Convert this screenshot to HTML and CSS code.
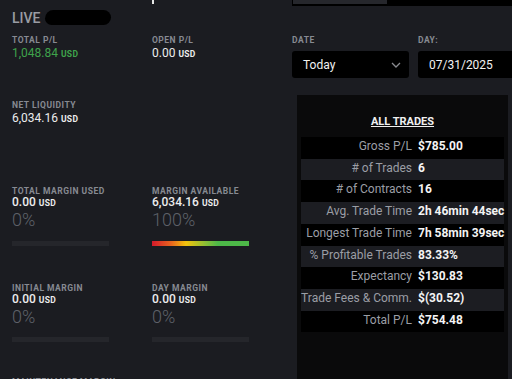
FILE: index.html
```html
<!DOCTYPE html>
<html lang="en">
<head>
<meta charset="utf-8">
<title>Account</title>
<link rel="stylesheet" href="styles.css">
</head>
<body>
<div class="page">
  <div class="left">
    <div class="title-frag"></div>
    <div class="live-row"><span class="live">LIVE</span><span class="redact"></span></div>

    <div class="row row-a">
      <div class="stat">
        <div class="label">TOTAL P/L</div>
        <div class="value big green">1,048.84 <span class="unit">USD</span></div>
      </div>
      <div class="stat">
        <div class="label">OPEN P/L</div>
        <div class="value big">0.00 <span class="unit">USD</span></div>
      </div>
    </div>

    <div class="row row-b">
      <div class="stat">
        <div class="label">NET LIQUIDITY</div>
        <div class="value big">6,034.16 <span class="unit">USD</span></div>
      </div>
    </div>

    <div class="row row-c">
      <div class="stat">
        <div class="label">TOTAL MARGIN USED</div>
        <div class="value">0.00 <span class="unit">USD</span></div>
        <div class="pct">0%</div>
        <div class="bar"></div>
      </div>
      <div class="stat">
        <div class="label">MARGIN AVAILABLE</div>
        <div class="value">6,034.16 <span class="unit">USD</span></div>
        <div class="pct">100%</div>
        <div class="bar bar-grad"></div>
      </div>
    </div>

    <div class="row row-d">
      <div class="stat">
        <div class="label">INITIAL MARGIN</div>
        <div class="value">0.00 <span class="unit">USD</span></div>
        <div class="pct">0%</div>
        <div class="bar bar-d"></div>
      </div>
      <div class="stat">
        <div class="label">DAY MARGIN</div>
        <div class="value">0.00 <span class="unit">USD</span></div>
        <div class="pct">0%</div>
        <div class="bar bar-d"></div>
      </div>
    </div>

    <div class="row row-e">
      <div class="stat">
        <div class="label">MAINTENANCE MARGIN</div>
      </div>
    </div>
  </div>

  <div class="right">
    <div class="top-strip"><div class="top-tab"></div></div>
    <div class="filters">
      <div class="label">DATE</div>
      <div class="label">DAY:</div>
      <div class="box select">
        <span>Today</span>
        <svg class="chev" width="10" height="6" viewBox="0 0 10 6"><path d="M1 1 L5 5 L9 1" fill="none" stroke="#8a8b90" stroke-width="1.3"/></svg>
      </div>
      <div class="box date">07/31/2025</div>
    </div>

    <div class="panel">
      <div class="panel-title">ALL TRADES</div>
      <div class="trades">
        <div class="tr"><span class="k">Gross P/L</span><span class="v">$785.00</span></div>
        <div class="tr"><span class="k"># of Trades</span><span class="v">6</span></div>
        <div class="tr"><span class="k"># of Contracts</span><span class="v">16</span></div>
        <div class="tr"><span class="k">Avg. Trade Time</span><span class="v">2h 46min 44sec</span></div>
        <div class="tr"><span class="k">Longest Trade Time</span><span class="v">7h 58min 39sec</span></div>
        <div class="tr"><span class="k">% Profitable Trades</span><span class="v">83.33%</span></div>
        <div class="tr"><span class="k">Expectancy</span><span class="v">$130.83</span></div>
        <div class="tr"><span class="k">Trade Fees &amp; Comm.</span><span class="v">$(30.52)</span></div>
        <div class="tr"><span class="k">Total P/L</span><span class="v">$754.48</span></div>
      </div>
    </div>
  </div>
</div>
</body>
</html>
```

FILE: styles.css
```css
html, body {
  margin: 0;
  padding: 0;
}
body {
  background: #1b1c21;
  font-family: Roboto, "Liberation Sans", sans-serif;
  color: #e9e9ea;
  width: 512px;
  height: 379px;
  overflow: hidden;
}
.page {
  display: flex;
  align-items: flex-start;
}
.left {
  width: 280px;
  padding-left: 12px;
  flex: none;
}
.title-frag {
  width: 2px;
  height: 4px;
  margin-left: 140px;
  background: #e6e6e6;
}
.live-row {
  margin-top: 6px;
  height: 16px;
  display: flex;
  align-items: flex-start;
}
.live {
  font-size: 14px;
  line-height: 16px;
  font-weight: 500;
  color: #9a9ca3;
}
.redact {
  display: block;
  width: 66px;
  height: 15px;
  margin-left: 5px;
  background: #000;
  border-radius: 9px 8px 8px 7px;
}
.row {
  display: grid;
  grid-template-columns: 140px 140px;
}
.row-a { margin-top: 9px; }
.row-b { margin-top: 39px; }
.row-c { margin-top: 60px; }
.row-d { margin-top: 37px; }
.row-e { margin-top: 35px; }

.label {
  font-size: 8.5px;
  line-height: 10px;
  font-weight: 700;
  letter-spacing: 0.5px;
  color: #878a92;
}
.value {
  font-size: 12px;
  line-height: 12px;
  font-weight: 500;
  color: #ececed;
}
.value.big {
  line-height: 14px;
  margin-top: 1px;
  font-weight: 400;
}
.value.green { color: #3fa34b; }
.unit {
  font-size: 8.5px;
  font-weight: 700;
  letter-spacing: 0.3px;
}
.pct {
  margin-top: 1px;
  font-size: 18px;
  line-height: 20px;
  font-weight: 300;
  color: #5e6169;
}
.bar {
  margin-top: 11px;
  width: 97px;
  height: 5px;
  background: #25262b;
}
.bar-d { margin-top: 10px; }
.bar-grad {
  background: linear-gradient(90deg, #d5192b 0%, #e8661e 20%, #f3c20c 35%, #8cbf35 55%, #4db848 68%, #4db848 100%);
}

.right {
  width: 220px;
  flex: none;
}
.top-strip {
  height: 6px;
  background: #000;
}
.top-tab {
  width: 94px;
  height: 4px;
  margin-left: 1px;
  background: #26272c;
}
.filters {
  margin-top: 29px;
  display: grid;
  grid-template-columns: 117px 94px;
  column-gap: 9px;
  row-gap: 6px;
}
.box {
  height: 27px;
  background: #000;
  border-radius: 3px;
  display: flex;
  align-items: center;
  padding-left: 11px;
  font-size: 12px;
  color: #f2f2f2;
}
.date {
  border-radius: 3px 0 0 3px;
}
.select {
  justify-content: space-between;
  padding-right: 8px;
}
.chev { display: block; }

.panel {
  margin-top: 17px;
  margin-left: 5px;
  width: 203px;
  height: 264px;
  padding: 20px 4px 0;
  background: #0a0a0b;
}
.panel-title {
  text-align: center;
  font-size: 11px;
  line-height: 13px;
  font-weight: 700;
  color: #f0f0f0;
  text-decoration: underline;
  text-underline-offset: 1px;
}
.trades {
  margin-top: 9px;
}
.tr {
  display: grid;
  grid-template-columns: 111px 1fr;
  column-gap: 6px;
  height: 21.73px;
  box-sizing: border-box;
  padding-bottom: 2.7px;
  line-height: 19px;
  font-size: 12px;
  background: #000;
  white-space: nowrap;
}
.tr:nth-child(even) {
  background: #1c1d22;
}
.k {
  text-align: right;
  color: #9b9ea5;
}
.v {
  font-weight: 700;
  color: #f4f4f4;
}
```
